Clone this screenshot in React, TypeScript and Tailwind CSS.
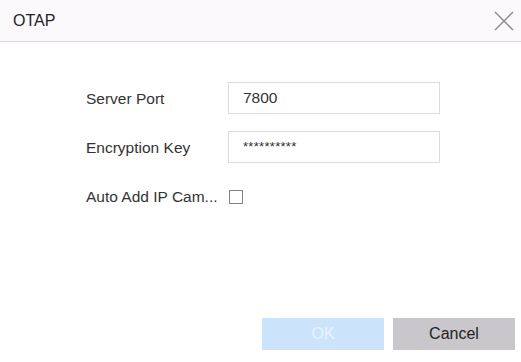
import React from "react";

export default function App() {
  return (
    <div
      className="w-[521px] h-[362px] bg-white flex flex-col text-[#333] overflow-hidden"
      style={{ fontFamily: '"Liberation Sans", Arial, sans-serif' }}
    >
      <div className="h-[42px] shrink-0 bg-[#fcf9fd] border-b border-[#d9d6dc] flex items-center justify-between pl-[13px] pr-[6px]">
        <span className="text-[16px] text-[#222] mt-[1px]">OTAP</span>
        <svg width="22" height="22" viewBox="0 0 22 22" className="mt-[1px]">
          <path d="M2 2 L20 20 M20 2 L2 20" stroke="#8a888c" strokeWidth="1.4" fill="none" />
        </svg>
      </div>
      <div className="flex-1 flex flex-col pl-[86px] pt-[40px]">
        <div className="flex items-center h-[32px]">
          <span className="w-[142px] text-[15.5px] mt-[2px]">Server Port</span>
          <div className="w-[212px] h-[32px] border border-[#dcdbe0] flex items-center pl-[14px] text-[15.5px] text-[#333]">7800</div>
        </div>
        <div className="flex items-center h-[32px] mt-[17px]">
          <span className="w-[142px] text-[15.5px] mt-[2px]">Encryption Key</span>
          <div className="w-[212px] h-[32px] border border-[#dcdbe0] flex items-center pl-[14px] text-[13px] text-[#333] tracking-[0.3px]">**********</div>
        </div>
        <div className="flex items-center h-[20px] mt-[24px]">
          <span className="text-[15.5px]">Auto Add IP Cam...</span>
          <span className="ml-[11px] w-[14px] h-[14px] border border-[#7d819c] bg-white" />
        </div>
      </div>
      <div className="flex justify-end gap-[9px] pr-[6px] pb-[12px]">
        <button className="w-[122px] h-[32px] bg-[#cce3fc] text-[#eaf3fe] text-[16px]">OK</button>
        <button className="w-[122px] h-[32px] bg-[#c9c7cc] text-[#222] text-[16px]">Cancel</button>
      </div>
    </div>
  );
}
